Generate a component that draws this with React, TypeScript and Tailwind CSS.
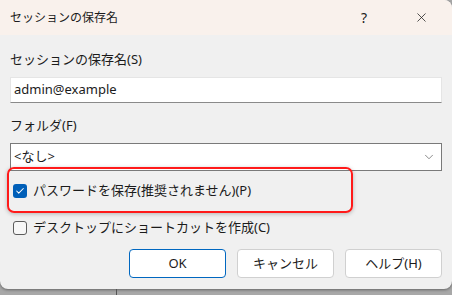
import { Check, ChevronDown, X } from "lucide-react"

const font = { fontFamily: '"Noto Sans", "Noto Sans CJK JP", sans-serif' }

function CheckRow({ checked, label }: { checked: boolean; label: string }) {
  return (
    <label className="flex items-center gap-[6px] h-[26px] pl-[13px] text-[13px] text-[#1b1b1b]">
      {checked ? (
        <span className="w-[14px] h-[14px] rounded-[3px] bg-[#005fb8] flex items-center justify-center">
          <Check className="w-[10px] h-[10px] text-white" strokeWidth={2.5} />
        </span>
      ) : (
        <span className="w-[14px] h-[14px] rounded-[3px] border border-[#5c5c5c] bg-[#f7f7f7]" />
      )}
      <span>{label}</span>
    </label>
  )
}

export default function App() {
  return (
    <div className="w-[452px] h-[295px] bg-[#a8a8a8] overflow-hidden" style={font}>
      <div className="w-[452px] h-[289px] bg-[#f0f0f0] rounded-tr-[8px] rounded-b-[8px] overflow-hidden flex flex-col shadow-[0_1px_3px_rgba(0,0,0,0.4)]">
        {/* Title bar */}
        <div className="h-[35px] bg-[#f9f1ec] flex items-center pl-[10px] text-[12px] text-[#1b1b1b]">
          <span className="flex-1">セッションの保存名</span>
          <span className="w-[20px] text-center text-[14px] mr-[40px]">?</span>
          <X className="w-[15px] h-[15px] mr-[23px]" strokeWidth={1.2} />
        </div>

        {/* Body */}
        <div className="relative flex-1 px-[10px] pt-[12px]">
          <div className="text-[13px] text-[#1b1b1b] h-[24px] leading-[24px]">セッションの保存名(S)</div>
          <div className="mt-[6px] h-[26px] bg-white border border-[#e5e5e5] border-b-[#8a8a8a] flex items-center px-[3px] text-[13px] text-[#1b1b1b]">
            admin@example
          </div>
          <div className="mt-[10px] text-[13px] text-[#1b1b1b] h-[24px] leading-[24px]">フォルダ(F)</div>
          <div className="mt-[6px] h-[28px] bg-white border border-[#7a7a7a] flex items-center px-[3px] text-[13px] text-[#1b1b1b]">
            <span className="flex-1">&lt;なし&gt;</span>
            <ChevronDown className="w-[14px] h-[14px] text-[#5a5a5a] mr-[2px]" strokeWidth={1.2} />
          </div>

          <div className="-mx-[10px] mt-[7px]">
            <CheckRow checked label="パスワードを保存(推奨されません)(P)" />
            <div className="h-[11px]" />
            <CheckRow checked={false} label="デスクトップにショートカットを作成(C)" />
          </div>

          <div className="flex justify-end gap-[11px] mt-[8px]">
            <button className="w-[97px] h-[29px] bg-white border border-[#0067c0] rounded-[4px] text-[13px] text-[#1b1b1b]">OK</button>
            <button className="w-[97px] h-[29px] bg-white border border-[#d0d0d0] rounded-[4px] text-[13px] text-[#1b1b1b]">キャンセル</button>
            <button className="w-[97px] h-[29px] bg-white border border-[#d0d0d0] rounded-[4px] text-[13px] text-[#1b1b1b]">ヘルプ(H)</button>
          </div>

          {/* Highlight annotation */}
          <div className="absolute left-[7px] top-[132px] w-[346px] h-[46px] border-2 border-[#ff1a1a] rounded-[7px] shadow-[0_1px_4px_rgba(0,0,0,0.25)] pointer-events-none" />
        </div>
      </div>
      <div className="flex h-[6px]">
        <div className="w-[117px] border-r border-[#555]" />
      </div>
    </div>
  )
}
